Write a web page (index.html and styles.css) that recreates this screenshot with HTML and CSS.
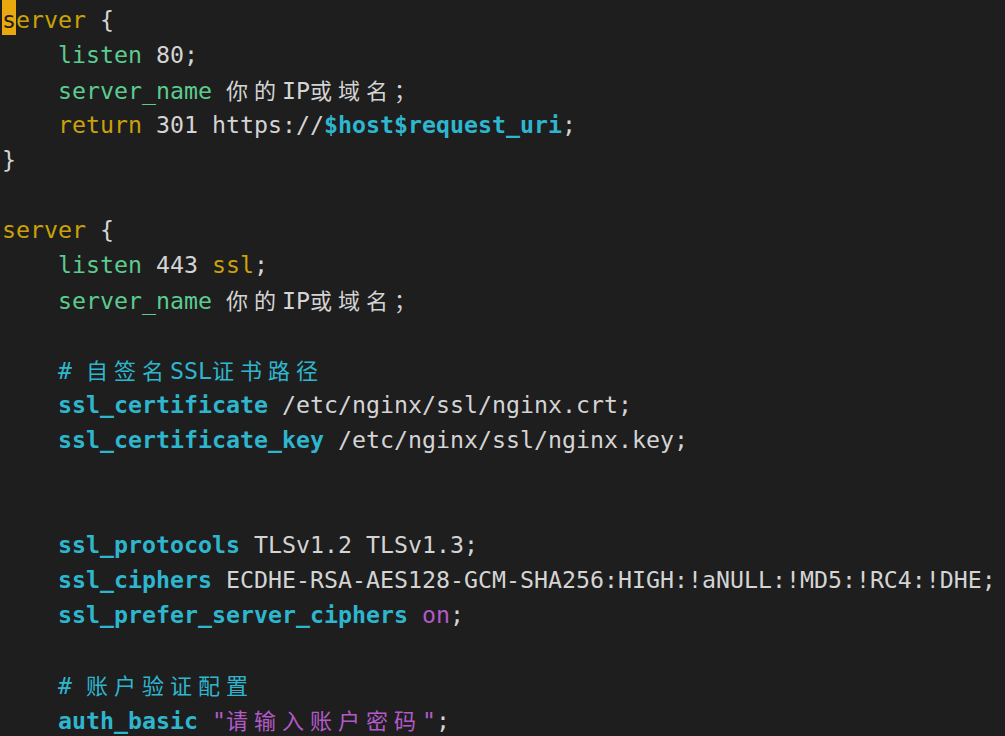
FILE: index.html
```html
<!DOCTYPE html>
<html>
<head>
<meta charset="utf-8">
<link rel="stylesheet" href="styles.css">
</head>
<body>
<div class="term">
<div class="ln"><span class="kw"><span class="cur">s</span>erver</span> {</div>
<div class="ln">    <span class="dir">listen</span> 80;</div>
<div class="ln">    <span class="dir">server_name</span> <span class="cjk">你的</span>IP<span class="cjk">或域名；</span></div>
<div class="ln">    <span class="kw">return</span> 301 https://<span class="var">$host$request_uri</span>;</div>
<div class="ln">}</div>
<div class="ln"> </div>
<div class="ln"><span class="kw">server</span> {</div>
<div class="ln">    <span class="dir">listen</span> 443 <span class="kw">ssl</span>;</div>
<div class="ln">    <span class="dir">server_name</span> <span class="cjk">你的</span>IP<span class="cjk">或域名；</span></div>
<div class="ln"> </div>
<div class="ln">    <span class="cm"># <span class="cjk">自签名</span>SSL<span class="cjk">证书路径</span></span></div>
<div class="ln">    <span class="var">ssl_certificate</span> /etc/nginx/ssl/nginx.crt;</div>
<div class="ln">    <span class="var">ssl_certificate_key</span> /etc/nginx/ssl/nginx.key;</div>
<div class="ln"> </div>
<div class="ln"> </div>
<div class="ln">    <span class="var">ssl_protocols</span> TLSv1.2 TLSv1.3;</div>
<div class="ln">    <span class="var">ssl_ciphers</span> ECDHE-RSA-AES128-GCM-SHA256:HIGH:!aNULL:!MD5:!RC4:!DHE;</div>
<div class="ln">    <span class="var">ssl_prefer_server_ciphers</span> <span class="str">on</span>;</div>
<div class="ln"> </div>
<div class="ln">    <span class="cm"># <span class="cjk">账户验证配置</span></span></div>
<div class="ln">    <span class="var">auth_basic</span> <span class="str">"<span class="cjk">请输入账户密码</span>"</span>;</div>
</div>
</body>
</html>
```
FILE: styles.css
```css
html, body {
  margin: 0;
  padding: 0;
  background: #1e1e1e;
  height: 100%;
  overflow: hidden;
}
.term {
  padding: 0 0 0 2px;
  font-family: "DejaVu Sans Mono", "Noto Sans CJK SC", monospace;
  font-size: 23.25px;
  color: #d4d4d4;
}
.ln {
  height: 35px;
  line-height: 39px;
  white-space: pre;
}
.cjk {
  font-family: "Noto Sans CJK SC", sans-serif;
  font-size: 22px;
  letter-spacing: 6px;
}
.kw { color: #c9a20a; }
.dir { color: #5ccb8f; }
.var { color: #2eb6cf; font-weight: bold; }
.cm { color: #2eb6cf; }
.str { color: #b35ac9; }
.cur {
  display: inline-block;
  background: #e8a80e;
  color: #1e1e1e;
  height: 35px;
  vertical-align: top;
}
```
